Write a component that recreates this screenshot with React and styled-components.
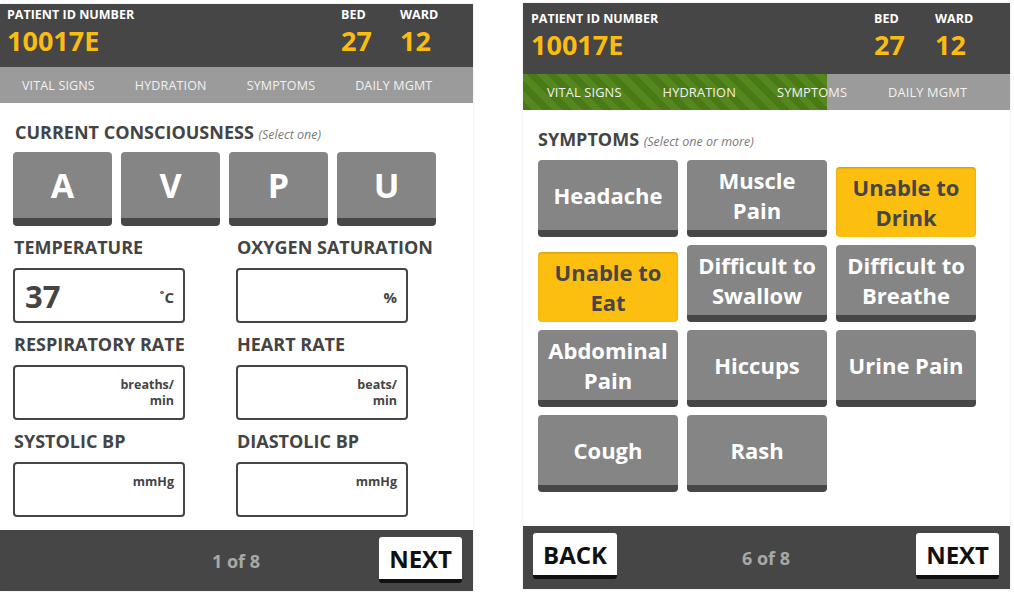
import styled, { createGlobalStyle } from 'styled-components';

const GlobalStyle = createGlobalStyle`
  html, body {
    margin: 0;
    padding: 0;
    background: #fff;
  }
  body {
    font-family: 'Open Sans', 'Liberation Sans', sans-serif;
  }
`;

const TABS = ['VITAL SIGNS', 'HYDRATION', 'SYMPTOMS', 'DAILY MGMT'];

const FIELDS = [
  { label: 'TEMPERATURE', value: '37', unit: '˚C', big: true },
  { label: 'OXYGEN SATURATION', unit: '%', big: true },
  { label: 'RESPIRATORY RATE', unit: 'breaths/\nmin' },
  { label: 'HEART RATE', unit: 'beats/\nmin' },
  { label: 'SYSTOLIC BP', unit: 'mmHg' },
  { label: 'DIASTOLIC BP', unit: 'mmHg' },
];

const SYMPTOMS = [
  { name: 'Headache' },
  { name: 'Muscle Pain' },
  { name: 'Unable to Drink', selected: true },
  { name: 'Unable to Eat', selected: true },
  { name: 'Difficult to Swallow' },
  { name: 'Difficult to Breathe' },
  { name: 'Abdominal Pain' },
  { name: 'Hiccups' },
  { name: 'Urine Pain' },
  { name: 'Cough' },
  { name: 'Rash' },
];

const PatientHeader = ({ tall }) => (
  <SHeader $tall={tall}>
    <SHeaderBlock>
      <SHeaderLabel>PATIENT ID NUMBER</SHeaderLabel>
      <SHeaderValue>10017E</SHeaderValue>
    </SHeaderBlock>
    <SHeaderBlock $width={tall ? 61 : 59}>
      <SHeaderLabel>BED</SHeaderLabel>
      <SHeaderValue>27</SHeaderValue>
    </SHeaderBlock>
    <SHeaderBlock $width={tall ? 75 : 73}>
      <SHeaderLabel>WARD</SHeaderLabel>
      <SHeaderValue>12</SHeaderValue>
    </SHeaderBlock>
  </SHeader>
);

const TabBar = ({ progress, inset, wide }) => (
  <STabBar $progress={progress} $inset={inset} $wide={wide}>
    {TABS.map((tab) => (
      <STab key={tab} $wide={wide}>
        {tab}
      </STab>
    ))}
  </STabBar>
);

const VitalSignsScreen = () => (
  <SPanel $width={473} $top={4}>
    <PatientHeader />
    <TabBar progress={0} inset={22} />
    <SContent $height={427}>
      <SHeading>
        CURRENT CONSCIOUSNESS <SHint>(Select one)</SHint>
      </SHeading>
      <SAvpuRow>
        {['A', 'V', 'P', 'U'].map((letter) => (
          <SAvpuButton key={letter}>{letter}</SAvpuButton>
        ))}
      </SAvpuRow>
      <SFieldGrid>
        {FIELDS.map((field) => (
          <SField key={field.label}>
            <SFieldLabel>{field.label}</SFieldLabel>
            <SInputBox>
              <SInputValue>{field.value}</SInputValue>
              <SUnit $big={field.big}>{field.unit}</SUnit>
            </SInputBox>
          </SField>
        ))}
      </SFieldGrid>
    </SContent>
    <SFooter $height={61}>
      <span />
      <SPageCount>1 of 8</SPageCount>
      <SNavButton $side="end">NEXT</SNavButton>
    </SFooter>
  </SPanel>
);

const SymptomsScreen = () => (
  <SPanel $width={487} $top={3} $left={50}>
    <PatientHeader tall />
    <TabBar progress={304} inset={24} wide />
    <SContent $height={416}>
      <SHeading>
        SYMPTOMS <SHint>(Select one or more)</SHint>
      </SHeading>
      <SSymptomGrid>
        {SYMPTOMS.map((s) => (
          <SSymptomButton key={s.name} $selected={s.selected}>
            {s.name}
          </SSymptomButton>
        ))}
      </SSymptomGrid>
    </SContent>
    <SFooter $height={63}>
      <SNavButton $side="start">BACK</SNavButton>
      <SPageCount>6 of 8</SPageCount>
      <SNavButton $side="end">NEXT</SNavButton>
    </SFooter>
  </SPanel>
);

export default function App() {
  return (
    <>
      <GlobalStyle />
      <SPage>
        <VitalSignsScreen />
        <SymptomsScreen />
      </SPage>
    </>
  );
}

const SPage = styled.div`
  display: flex;
  align-items: flex-start;
  width: 1014px;
  height: 595px;
  overflow: hidden;
`;

const SPanel = styled.div`
  display: flex;
  flex-direction: column;
  flex-shrink: 0;
  width: ${(p) => p.$width}px;
  margin-top: ${(p) => p.$top}px;
  margin-left: ${(p) => p.$left || 0}px;
  box-shadow: 0 0 2px rgba(0, 0, 0, 0.12);
`;

const SHeader = styled.div`
  display: flex;
  height: ${(p) => (p.$tall ? 71 : 63)}px;
  box-sizing: border-box;
  padding: ${(p) => (p.$tall ? '7px 0 0 8px' : '2px 0 0 7px')};
  background: #464646;
`;

const SHeaderBlock = styled.div`
  display: flex;
  flex-direction: column;
  ${(p) => (p.$width ? `width: ${p.$width}px;` : 'flex: 1;')}
`;

const SHeaderLabel = styled.div`
  font-size: 12.5px;
  font-weight: 700;
  line-height: 18px;
  color: #fff;
`;

const SHeaderValue = styled.div`
  font-size: 27px;
  font-weight: 700;
  line-height: 33px;
  color: #fbbc12;
`;

const STabBar = styled.div`
  display: flex;
  align-items: center;
  gap: ${(p) => (p.$wide ? 41 : 40)}px;
  height: 36px;
  padding-left: ${(p) => p.$inset}px;
  background:
    repeating-linear-gradient(45deg, #4a7a15 0 7px, #55871f 7px 14px) 0 0 / ${(p) => p.$progress}px 100% no-repeat,
    #9b9b9b;
`;

const STab = styled.div`
  font-size: ${(p) => (p.$wide ? 12.8 : 12.5)}px;
  letter-spacing: 0.15px;
  color: #f2f2f2;
  white-space: nowrap;
`;

const SContent = styled.div`
  display: flex;
  flex-direction: column;
  box-sizing: border-box;
  height: ${(p) => p.$height}px;
  padding: 18px 13px 0 15px;
  background: #fff;
`;

const SHeading = styled.div`
  font-size: 18px;
  font-weight: 700;
  line-height: 22px;
  color: #444;
  white-space: nowrap;
`;

const SHint = styled.span`
  font-size: 12.5px;
  font-weight: 400;
  font-style: italic;
  color: #7a7a7a;
`;

const SAvpuRow = styled.div`
  display: flex;
  gap: 9px;
  margin: 6px 0 0 -2px;
`;

const SAvpuButton = styled.div`
  display: flex;
  align-items: center;
  justify-content: center;
  width: 99px;
  height: 66px;
  border-radius: 4px;
  border-bottom: 8px solid #474747;
  background: #858585;
  font-size: 34px;
  font-weight: 700;
  color: #fff;
`;

const SFieldGrid = styled.div`
  display: grid;
  grid-template-columns: 172px 172px;
  column-gap: 51px;
  margin: 10px 0 0 -2px;
`;

const SField = styled.div`
  display: flex;
  flex-direction: column;
  gap: 10px;
  padding-bottom: 10px;
`;

const SFieldLabel = styled.div`
  padding-left: 1px;
  font-size: 18px;
  font-weight: 700;
  line-height: 22px;
  color: #444;
  white-space: nowrap;
`;

const SInputBox = styled.div`
  display: flex;
  justify-content: space-between;
  align-items: flex-start;
  box-sizing: border-box;
  height: 55px;
  padding: 6px 9px 0 10px;
  border: 2px solid #454545;
  border-radius: 4px;
`;

const SInputValue = styled.div`
  font-size: 31px;
  font-weight: 700;
  line-height: 40px;
  color: #444;
`;

const SUnit = styled.div`
  margin-top: ${(p) => (p.$big ? 13 : 4)}px;
  font-size: ${(p) => (p.$big ? 15 : 12.5)}px;
  font-weight: 700;
  line-height: 16px;
  color: #444;
  text-align: right;
  white-space: pre-line;
`;

const SSymptomGrid = styled.div`
  display: grid;
  grid-template-columns: repeat(3, 140px);
  grid-auto-rows: 77px;
  gap: 8px 9px;
  margin-top: 7px;
`;

const SSymptomButton = styled.div`
  display: flex;
  align-items: center;
  justify-content: center;
  box-sizing: border-box;
  padding: 0 8px;
  border-radius: 4px;
  font-size: 22px;
  font-weight: 700;
  line-height: 30px;
  text-align: center;
  ${(p) =>
    p.$selected
      ? `
    margin-top: 7px;
    background: #fcbf10;
    color: #464646;
    box-shadow: inset 0 1px 2px rgba(0, 0, 0, 0.2);
  `
      : `
    border-bottom: 7px solid #474747;
    background: #858585;
    color: #fff;
  `}
`;

const SFooter = styled.div`
  display: grid;
  grid-template-columns: 1fr auto 1fr;
  align-items: start;
  box-sizing: border-box;
  height: ${(p) => p.$height}px;
  padding: 7px 11px 0 10px;
  background: #464646;
`;

const SPageCount = styled.div`
  align-self: center;
  margin-top: -6px;
  font-size: 18px;
  font-weight: 700;
  color: #a8a8a8;
`;

const SNavButton = styled.div`
  justify-self: ${(p) => p.$side};
  box-sizing: border-box;
  height: 46px;
  padding: 0 10px;
  border-radius: 3px;
  border-bottom: 4px solid #111;
  background: #fff;
  font-size: 24px;
  font-weight: 700;
  line-height: 43px;
  color: #111;
`;
